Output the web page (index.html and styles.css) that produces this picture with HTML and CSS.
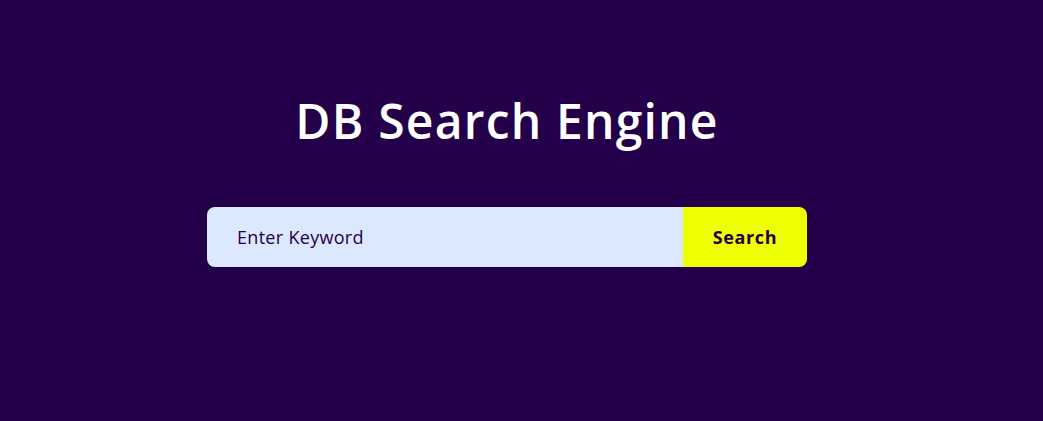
FILE: index.html
```html
<!DOCTYPE html>
<html lang="en">
<head>
<meta charset="utf-8">
<title>DB Search Engine</title>
<link rel="stylesheet" href="styles.css">
</head>
<body>
<main class="page">
  <h1 class="title">DB Search Engine</h1>
  <form class="search" onsubmit="return false">
    <input class="search-input" type="text" placeholder="Enter Keyword">
    <button class="search-button" type="submit">Search</button>
  </form>
</main>
</body>
</html>
```

FILE: styles.css
```css
* { box-sizing: border-box; }

html, body {
  margin: 0;
  height: 100%;
  background: #24004b;
}

body {
  font-family: "Open Sans", "Liberation Sans", sans-serif;
  overflow: hidden;
}

.page {
  width: 1014px;
  display: flex;
  flex-direction: column;
  align-items: center;
  padding-top: 89px;
}

.title {
  margin: 0;
  color: #ffffff;
  font-size: 48px;
  font-weight: 600;
  letter-spacing: 1.2px;
  line-height: 64px;
}

.search {
  margin-top: 54px;
  display: flex;
  width: 600px;
  height: 60px;
  border-radius: 8px;
  overflow: hidden;
}

.search-input {
  flex: 1;
  border: none;
  outline: none;
  background: #dce8fd;
  padding: 0 30px;
  font-family: inherit;
  font-size: 18px;
  letter-spacing: 0.3px;
  color: #24004b;
}

.search-input::placeholder {
  color: #24004b;
  opacity: 1;
}

.search-button {
  width: 124px;
  border: none;
  background: #eeff00;
  color: #24004b;
  font-family: inherit;
  font-size: 18px;
  font-weight: 700;
  letter-spacing: 0.6px;
  padding: 0;
  cursor: pointer;
}
```
